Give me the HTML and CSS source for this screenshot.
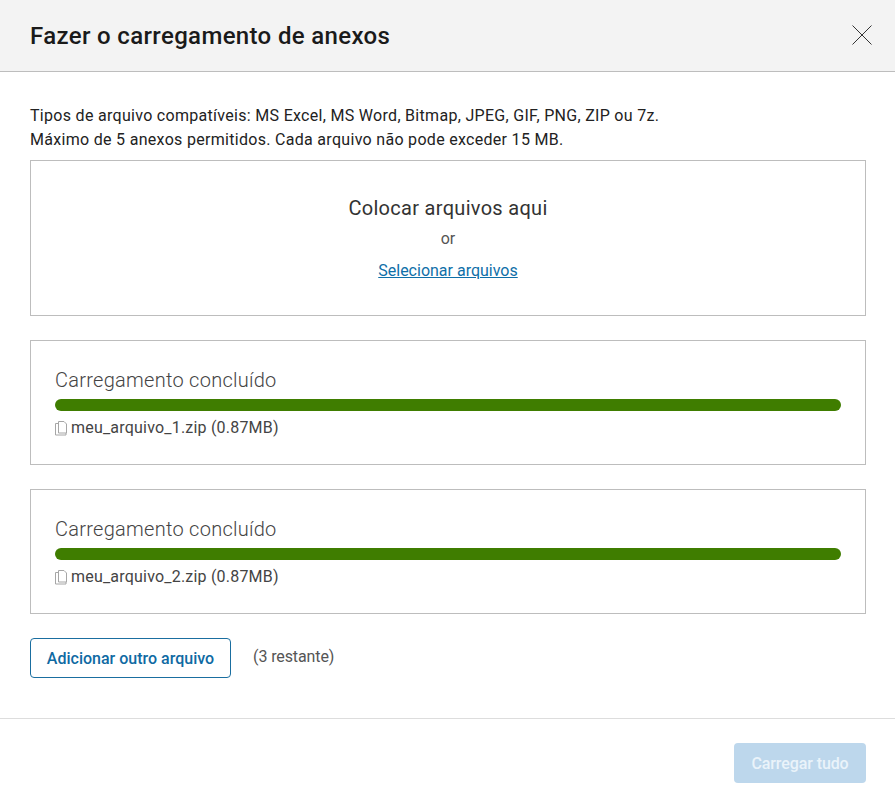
FILE: index.html
```html
<!DOCTYPE html>
<html lang="pt">
<head>
    <meta charset="UTF-8">
    <title>Fazer o carregamento de anexos</title>
    <link rel="stylesheet" href="styles.css">
</head>
<body>
    <div class="modal">
        <!-- Header -->
        <div class="modal-header">
            <h1>Fazer o carregamento de anexos</h1>
            <button class="close-btn" aria-label="Fechar">
                <svg width="20" height="20" viewBox="0 0 20 20"><path d="M.5.5l19 19M19.500.5l-19 19" stroke="#333" stroke-width="1" fill="none"/></svg>
            </button>
        </div>

        <!-- Body -->
        <div class="modal-body">
            <p class="info">Tipos de arquivo compatíveis: MS Excel, MS Word, Bitmap, JPEG, GIF, PNG, ZIP ou 7z.<br>Máximo de 5 anexos permitidos. Cada arquivo não pode exceder 15 MB.</p>

            <div class="box drop-zone">
                <div class="drop-title">Colocar arquivos aqui</div>
                <div class="drop-or">or</div>
                <a class="drop-link" href="#">Selecionar arquivos</a>
            </div>

            <div class="box upload">
                <div class="upload-status">Carregamento concluído</div>
                <div class="bar"></div>
                <div class="file">
                    <svg class="file-icon" width="12" height="15" viewBox="0 0 12 15"><path d="M3.500.5h5.500l2.500 2.500v9h-8zM3.500 2.500H.5v11.500h10.500V12" stroke="#a6a6a6" fill="none"/></svg>
                    <span>meu_arquivo_1.zip (0.87MB)</span>
                </div>
            </div>

            <div class="box upload">
                <div class="upload-status">Carregamento concluído</div>
                <div class="bar"></div>
                <div class="file">
                    <svg class="file-icon" width="12" height="15" viewBox="0 0 12 15"><path d="M3.500.5h5.500l2.500 2.500v9h-8zM3.500 2.500H.5v11.500h10.500V12" stroke="#a6a6a6" fill="none"/></svg>
                    <span>meu_arquivo_2.zip (0.87MB)</span>
                </div>
            </div>

            <div class="add-row">
                <button class="btn-outline">Adicionar outro arquivo</button>
                <span class="remaining">(3 restante)</span>
            </div>
        </div>

        <!-- Footer -->
        <div class="modal-footer">
            <button class="btn-primary" disabled>Carregar tudo</button>
        </div>
    </div>
</body>
</html>
```

FILE: styles.css
```css
* { margin: 0; padding: 0; box-sizing: border-box; }
body { background: #fff; color: #222; font-family: Roboto, "Liberation Sans", sans-serif; }
button { font-family: inherit; }

.modal { width: 895px; height: 800px; display: flex; flex-direction: column; }

.modal-header {
    height: 72px; background: #f3f3f3; border-bottom: 1px solid #bdbdbd;
    display: flex; align-items: center; justify-content: space-between;
    padding: 0 23px 0 30px;
}
.modal-header h1 { font-size: 24px; font-weight: 500; letter-spacing: 0.35px; color: #1a1a1a; }
.close-btn { background: none; border: none; width: 20px; height: 20px; margin-bottom: 1px; cursor: pointer; }
.close-btn svg { display: block; }

.modal-body { padding: 32px 29px 0 30px; flex: 1; }
.info { font-size: 16px; line-height: 24px; color: #222; letter-spacing: 0.3px; margin-bottom: 8px; }

.box { border: 1px solid #bdbdbd; }

.drop-zone { height: 156px; text-align: center; padding-top: 35px; margin-bottom: 24px; }
.drop-title { font-size: 20px; line-height: 24px; letter-spacing: 0.3px; color: #333; }
.drop-or { font-size: 16px; line-height: 20px; color: #555; margin-top: 9px; }
.drop-link { display: inline-block; font-size: 16px; line-height: 20px; color: #0f6fa8; margin-top: 12px; }

.upload { height: 125px; padding: 27px 24px 0 24px; margin-bottom: 24px; }
.upload-status { font-size: 20px; font-weight: 300; line-height: 24px; letter-spacing: 0.27px; color: #444; }
.bar { height: 12px; background: #3f7d00; border-radius: 6px; margin-top: 7px; }
.file { display: flex; align-items: center; gap: 4px; margin-top: 7px; font-size: 16px; line-height: 20px; letter-spacing: 0.2px; color: #444; }
.file-icon { flex: none; }

.add-row { display: flex; align-items: center; gap: 22px; }
.btn-outline {
    width: 201px; height: 40px; background: #fff; border: 1px solid #1a6ea0; border-radius: 4px;
    color: #0f6aa3; font-size: 16px; font-weight: 500; cursor: pointer;
}
.remaining { font-size: 16px; color: #555; letter-spacing: -0.1px; padding-bottom: 4px; }

.modal-footer {
    height: 82px; border-top: 1px solid #ddd;
    display: flex; justify-content: flex-end; align-items: flex-start;
    padding: 24px 29px 0 0;
}
.btn-primary {
    width: 132px; height: 40px; background: #bdd7ec; border: none; border-radius: 4px;
    color: #eaf3fa; font-size: 16px; font-weight: 500; letter-spacing: -0.1px;
}
```
